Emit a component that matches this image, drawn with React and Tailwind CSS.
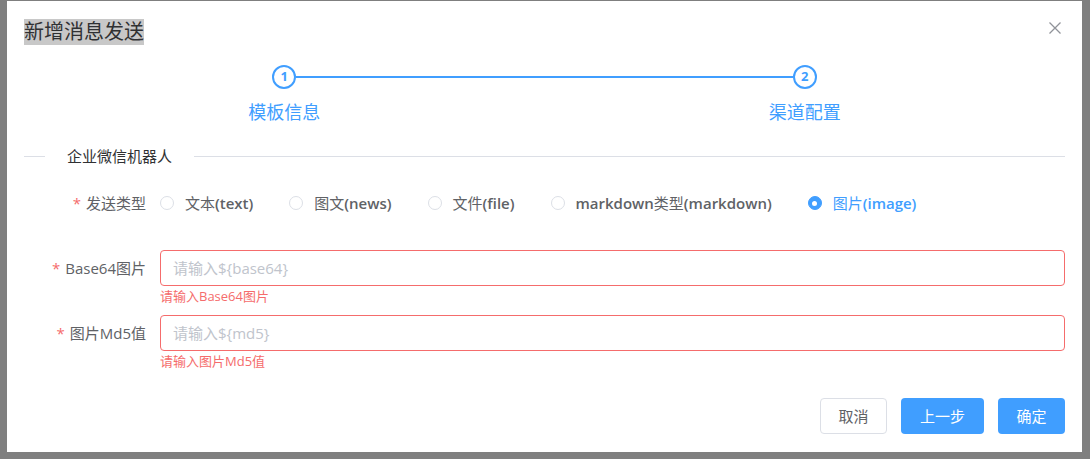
import React from "react";

function Radio({ parts, checked }) {
  return (
    <label className="flex items-center mr-[36px] cursor-pointer">
      {checked ? (
        <span className="w-[14px] h-[14px] rounded-full bg-[#409eff] border border-[#409eff] flex items-center justify-center">
          <span className="w-[5px] h-[5px] rounded-full bg-white" />
        </span>
      ) : (
        <span className="w-[14px] h-[14px] rounded-full border border-[#dcdfe6] bg-white" />
      )}
      <span
        className={
          "pl-[11px] text-[15px] " +
          (checked ? "text-[#409eff]" : "text-[#606266]")
        }
      >
        {parts.map((p, i) =>
          /[\u4e00-\u9fff]/.test(p) ? (
            <span key={i} className="font-normal">{p}</span>
          ) : (
            <span key={i} className="font-semibold">{p}</span>
          )
        )}
      </span>
    </label>
  );
}

function Label({ children }) {
  return (
    <div className="w-[136px] pr-[14px] text-right text-[15px] text-[#606266] shrink-0">
      <span className="text-[#f56c6c] mr-[5px]">*</span>
      {children}
    </div>
  );
}

function InputRow({ label, placeholder, error, mb }) {
  return (
    <div className={"flex items-center " + mb}>
      <Label>{label}</Label>
      <div className="relative flex-1">
        <input
          className="w-full h-[36px] border border-[#f56c6c] rounded-[4px] px-[12px] text-[15px] outline-none placeholder:text-[#c0c4cc] text-[#606266]"
          placeholder={placeholder}
          readOnly
        />
        <div className="absolute left-0 top-full pt-[4px] text-[13px] leading-none text-[#f56c6c]">
          {error}
        </div>
      </div>
    </div>
  );
}

export default function App() {
  return (
    <div className="w-[1090px] h-[459px] bg-[#7f7f7f] pl-[7px] pt-[1px] overflow-hidden font-['Open_Sans','Noto_Sans_CJK_SC',sans-serif]">
      <div className="relative w-[1075px] h-[451px] bg-white px-[17px]">
        {/* header */}
        <div className="pt-[18px]">
          <span className="inline-block bg-[#c8c8c8] text-[20px] leading-[26px] text-[#303133]">
            新增消息发送
          </span>
        </div>
        <button className="absolute right-[20px] top-[20px] w-[14px] h-[14px] text-[#909399]">
          <svg viewBox="0 0 14 14" width="14" height="14" fill="none" stroke="currentColor" strokeWidth="1.3">
            <path d="M1.5 1.5 L12.5 12.5 M12.5 1.5 L1.5 12.5" />
          </svg>
        </button>

        {/* steps */}
        <div className="grid grid-cols-2 mt-[20px]">
          {[
            ["1", "模板信息"],
            ["2", "渠道配置"],
          ].map(([n, t], i) => (
            <div key={n} className="relative flex flex-col items-center">
              {i === 0 && (
                <div className="absolute top-[11px] left-[calc(50%+12px)] w-[calc(100%-24px)] h-[2px] bg-[#409eff]" />
              )}
              <div className="w-[24px] h-[24px] rounded-full border-2 border-[#409eff] flex items-center justify-center text-[13px] font-bold text-[#409eff] bg-white">
                {n}
              </div>
              <div className="mt-[11px] text-[18px] leading-[24px] text-[#409eff]">{t}</div>
            </div>
          ))}
        </div>

        {/* divider */}
        <div className="flex items-center h-[20px] mt-[22px]">
          <div className="w-[21px] h-px bg-[#dcdfe6]" />
          <div className="px-[22px] text-[15px] text-[#303133]">企业微信机器人</div>
          <div className="flex-1 h-px bg-[#dcdfe6]" />
        </div>

        {/* send type */}
        <div className="flex items-center h-[36px] mt-[19px] mb-[29px]">
          <Label>发送类型</Label>
          <div className="flex items-center">
            <Radio parts={["文本", "(text)"]} />
            <Radio parts={["图文", "(news)"]} />
            <Radio parts={["文件", "(file)"]} />
            <Radio parts={["markdown", "类型", "(markdown)"]} />
            <Radio parts={["图片", "(image)"]} checked />
          </div>
        </div>

        <InputRow label="Base64图片" placeholder="请输入${base64}" error="请输入Base64图片" mb="mb-[29px]" />
        <InputRow label="图片Md5值" placeholder="请输入${md5}" error="请输入图片Md5值" mb="mb-[47px]" />

        {/* footer */}
        <div className="flex justify-end gap-[14px]">
          <button className="w-[67px] h-[36px] rounded-[4px] border border-[#dcdfe6] bg-white text-[15px] text-[#606266]">
            取消
          </button>
          <button className="w-[83px] h-[36px] rounded-[4px] bg-[#409eff] text-[15px] text-white">
            上一步
          </button>
          <button className="w-[67px] h-[36px] rounded-[4px] bg-[#409eff] text-[15px] text-white">
            确定
          </button>
        </div>
      </div>
    </div>
  );
}
